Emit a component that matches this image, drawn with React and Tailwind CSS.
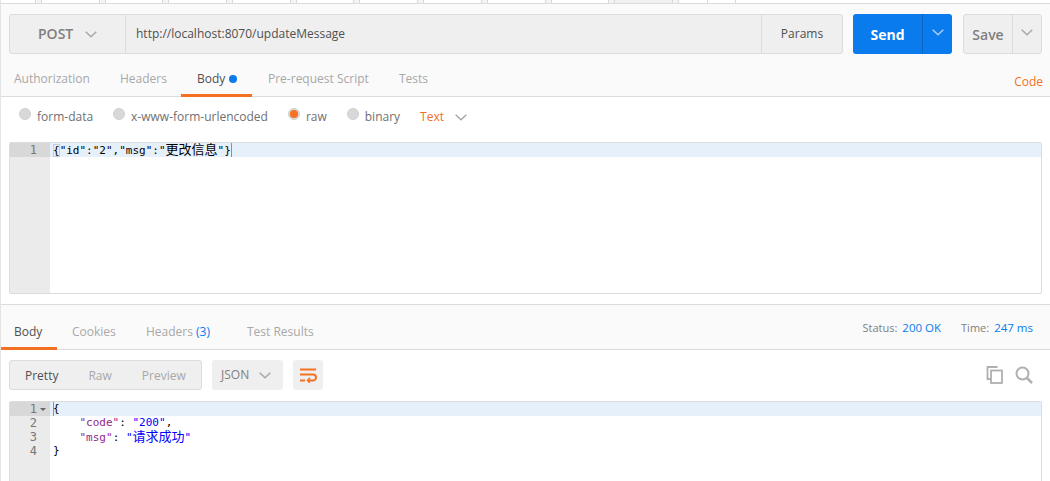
import React from "react";

const sans = "[font-family:'Open_Sans',sans-serif]";
const mono = "[font-family:'DejaVu_Sans_Mono','Noto_Sans_CJK_SC',monospace]";

function Chev({ className = "", color = "#a8a8a8", w = 12 }) {
  return (
    <svg width={w} height="7" viewBox="0 0 12 7" className={className} fill="none">
      <path d="M0.7 0.7 L6 5.8 L11.3 0.7" stroke={color} strokeWidth="1.5" />
    </svg>
  );
}

function Radio({ on, label, mr }) {
  return (
    <div className={`flex items-center gap-[6px] ${mr}`}>
      <div className="w-3 h-3 rounded-full bg-[#d8d8d8] border border-[#d0d0d0] flex items-center justify-center -mt-[6px]">
        {on && <div className="w-2 h-2 rounded-full bg-[#f47023]" />}
      </div>
      <span className="text-[12px] text-[#707070]">{label}</span>
    </div>
  );
}

function Topstrip() {
  const tabs = Array.from({ length: 9 });
  return (
    <div className="h-1 border-b border-[#dcdcdc] flex bg-[#f4f4f4] overflow-hidden shrink-0">
      <div className="w-[35px] shrink-0 border-r border-[#d8d8d8] bg-white" />
      <div className="flex gap-[5px] pl-[5px]">
        {tabs.map((_, i) => (
          <div key={i} className="w-[58.7px] shrink-0 bg-white border-x border-[#d8d8d8]" />
        ))}
        <div className="w-[58.7px] shrink-0 bg-[#f0f0f0] border-x border-[#d8d8d8]" />
      </div>
      <div className="w-[30px] ml-[5px] shrink-0 bg-white border-x border-[#d8d8d8]" />
      <div className="w-[28px] shrink-0 bg-white border-r border-[#d8d8d8]" />
      <div className="flex-1 bg-white" />
    </div>
  );
}

export default function App() {
  return (
    <div className={`w-[1050px] h-[481px] overflow-hidden bg-white flex flex-col border-l border-[#e4e4e4] ${sans}`}>
      <Topstrip />
      <div className="bg-[#fafafa] h-[93px] border-b border-[#dcdcdc] shrink-0 flex flex-col">
        <div className="flex pt-[10px] pl-2">
          <div className="w-[1033px] flex shrink-0 h-10">
            <div className="flex-1 flex bg-[#efefef] border border-[#dcdcdc] rounded-[3px] h-10 mr-[10px]">
              <div className="w-[116px] shrink-0 border-r border-[#dcdcdc] flex items-center pl-[28px] gap-[12px]">
                <span className="text-[14px] font-semibold text-[#808080] leading-none">POST</span>
                <Chev />
              </div>
              <div className="flex-1 flex items-center pl-[10px] text-[12px] text-[#505050] -mt-px">http://localhost:8070/updateMessage</div>
              <div className="w-[81px] shrink-0 border-l border-[#dcdcdc] flex items-center justify-center text-[12px] text-[#505050]">Params</div>
            </div>
            <div className="flex w-[99px] h-10 mr-[11px] bg-[#097bed] rounded-[3px] shrink-0">
              <div className="w-[69px] flex items-center justify-center text-[14px] font-bold text-white">Send</div>
              <div className="flex-1 border-l border-[#0766c4] flex items-center justify-center"><Chev color="#a9cdf5" className="-mt-1" /></div>
            </div>
            <div className="flex w-[79px] h-10 bg-[#efefef] border border-[#dcdcdc] rounded-[3px] shrink-0">
              <div className="w-[48px] flex items-center justify-center text-[14px] font-semibold text-[#808080]">Save</div>
              <div className="flex-1 border-l border-[#dcdcdc] flex items-center justify-center"><Chev className="-mt-1" /></div>
            </div>
          </div>
        </div>
        <div className="flex-1 flex items-stretch relative">
          <div className="flex pl-[13px] text-[12px] text-[#a8a8a8]">
            <div className="pt-[16px] w-[106px]">Authorization</div>
            <div className="pt-[16px] w-[61px]">Headers</div>
            <div className="w-[71px] h-[43px] border-b-[3px] border-[#f47023] pt-[16px] pl-[16px] text-[#505050] flex gap-[4px] items-start">
              Body<span className="w-2 h-2 rounded-full bg-[#097bed] mt-[5px]" />
            </div>
            <div className="pt-[16px] pl-[16px] w-[132px]">Pre-request Script</div>
            <div className="pt-[16px] pl-[15px]">Tests</div>
          </div>
          <div className="ml-auto pr-[7px] pt-[19px] text-[12px] text-[#f47023]">Code</div>
        </div>
      </div>

      <div className="h-[39px] mb-[6px] shrink-0 flex items-center pl-[18px]">
        <Radio label="form-data" mr="mr-[20px]" />
        <Radio label="x-www-form-urlencoded" mr="mr-[20px]" />
        <Radio on label="raw" mr="mr-[20px]" />
        <Radio label="binary" mr="mr-[20px]" />
        <span className="text-[12px] text-[#f47023] mt-[1px] mr-[11px]">Text</span>
        <Chev className="mt-[1px]" />
      </div>

      <div className="ml-2 w-[1033px] h-[152px] shrink-0 border border-[#dcdcdc] rounded-[2px] flex overflow-hidden">
        <div className="w-10 shrink-0 bg-[#ebebeb]">
          <div className={`h-[14px] bg-[#d8d8d8] text-[12px] leading-[14px] text-[#777] text-right pr-[13px] ${mono}`}>1</div>
        </div>
        <div className="flex-1">
          <div className={`h-[14px] bg-[#e6f0fb] text-[11px] leading-[14px] text-black pl-[3px] whitespace-pre ${mono}`}>
            <span className="outline outline-[#c4cdd8] -outline-offset-1">{"{"}</span>
            {'"id":"2","msg":"'}
            <span className="text-[13px]">更改信息</span>
            {'"}'}
            <span className="inline-block w-px h-[14px] bg-[#8a929c] align-top" />
          </div>
        </div>
      </div>

      <div className="h-[10px] shrink-0" />

      <div className="h-[46px] shrink-0 bg-[#fafafa] border-y border-[#dcdcdc] flex text-[12px] text-[#a8a8a8]">
        <div className="w-[57px] -ml-px h-[45px] border-b-[3px] border-[#f47023] pt-[18px] pl-[14px] text-[#505050]">Body</div>
        <div className="pt-[18px] pl-[15px] w-[74px]">Cookies</div>
        <div className="pt-[18px] pl-[15px] w-[100px]">Headers <span className="text-[#097bed]">(3)</span></div>
        <div className="pt-[18px] pl-[16px]">Test Results</div>
        <div className="ml-auto pr-[17px] pt-[14px] text-[11.5px] flex items-baseline">
          <span className="text-[11px] text-[#808080] mr-[5px]">Status:</span>
          <span className="text-[#097bed] mr-[20px]">200 OK</span>
          <span className="text-[11px] text-[#808080] mr-[5px]">Time:</span>
          <span className="text-[#097bed]">247 ms</span>
        </div>
      </div>

      <div className="h-[51px] shrink-0 flex items-start pl-2 pt-[10px] relative">
        <div className="w-[193px] h-[30px] bg-[#efefef] border border-[#dcdcdc] rounded-[3px] flex items-center text-[12px] text-[#a8a8a8] mr-[10px] pt-[1px]">
          <span className="ml-[15px] text-[#505050]">Pretty</span>
          <span className="ml-[30px]">Raw</span>
          <span className="ml-[30px]">Preview</span>
        </div>
        <div className="w-[71px] h-[30px] bg-[#efefef] rounded-[3px] flex items-center pl-[9px] gap-[10px] text-[12px] text-[#808080] mr-[10px]">
          JSON <Chev />
        </div>
        <div className="w-[30px] h-[30px] bg-[#efefef] rounded-[3px] flex items-center justify-center">
          <svg width="18" height="15" viewBox="0 0 18 15" fill="none" stroke="#f47023" strokeWidth="2">
            <path d="M1 1.5 H17" />
            <path d="M1 6.5 H14 a3 3 0 0 1 0 6 H9" />
            <path d="M1 12.5 H6" />
            <path d="M11 9.8 L8.5 12.5 L11 15" strokeWidth="1.5" />
          </svg>
        </div>
        <div className="ml-auto flex items-center gap-[11px] pr-[17px] pt-[6px]">
          <svg width="18" height="18" viewBox="0 0 18 18" fill="none" stroke="#b0b0b0" strokeWidth="1.8">
            <path d="M11.5 1 H1.5 V13 H5" />
            <rect x="5" y="4.5" width="11" height="12.5" />
          </svg>
          <svg width="18" height="18" viewBox="0 0 18 18" fill="none" stroke="#b0b0b0" strokeWidth="2">
            <circle cx="7.5" cy="7.5" r="6" />
            <path d="M12 12 L17 17" strokeWidth="2.5" />
          </svg>
        </div>
      </div>

      <div className={`ml-2 w-[1033px] flex-1 border border-[#dcdcdc] border-b-0 rounded-t-[2px] flex overflow-hidden text-[11px] leading-[14px] ${mono}`}>
        <div className="w-10 shrink-0 bg-[#ebebeb] text-[12px] text-[#777] text-right">
          <div className="h-[14px] bg-[#d8d8d8] pr-[13px] relative">1
            <span className="absolute right-[4px] top-[5.5px] w-0 h-0 border-x-[3px] border-x-transparent border-t-[3.5px] border-t-[#666]" />
          </div>
          <div className="h-[14px] pr-[13px]">2</div>
          <div className="h-[14px] pr-[13px]">3</div>
          <div className="h-[14px] pr-[13px]">4</div>
        </div>
        <div className="flex-1 whitespace-pre">
          <div className="h-[14px] bg-[#e6f0fb] pl-[3px] flex">
            <span className="w-px h-[14px] bg-[#8a929c] -mr-px" />
            <span>{"{"}</span>
          </div>
          <div className="h-[14px] pl-[3px]">{"    "}<span className="text-[#92278f]">"code"</span>: <span className="text-[#0000ff]">"200"</span>,</div>
          <div className="h-[14px] pl-[3px]">{"    "}<span className="text-[#92278f]">"msg"</span>: <span className="text-[#0000ff]">"<span className="text-[13px]">请求成功</span>"</span></div>
          <div className="h-[14px] pl-[3px]">{"}"}</div>
        </div>
      </div>
    </div>
  );
}
